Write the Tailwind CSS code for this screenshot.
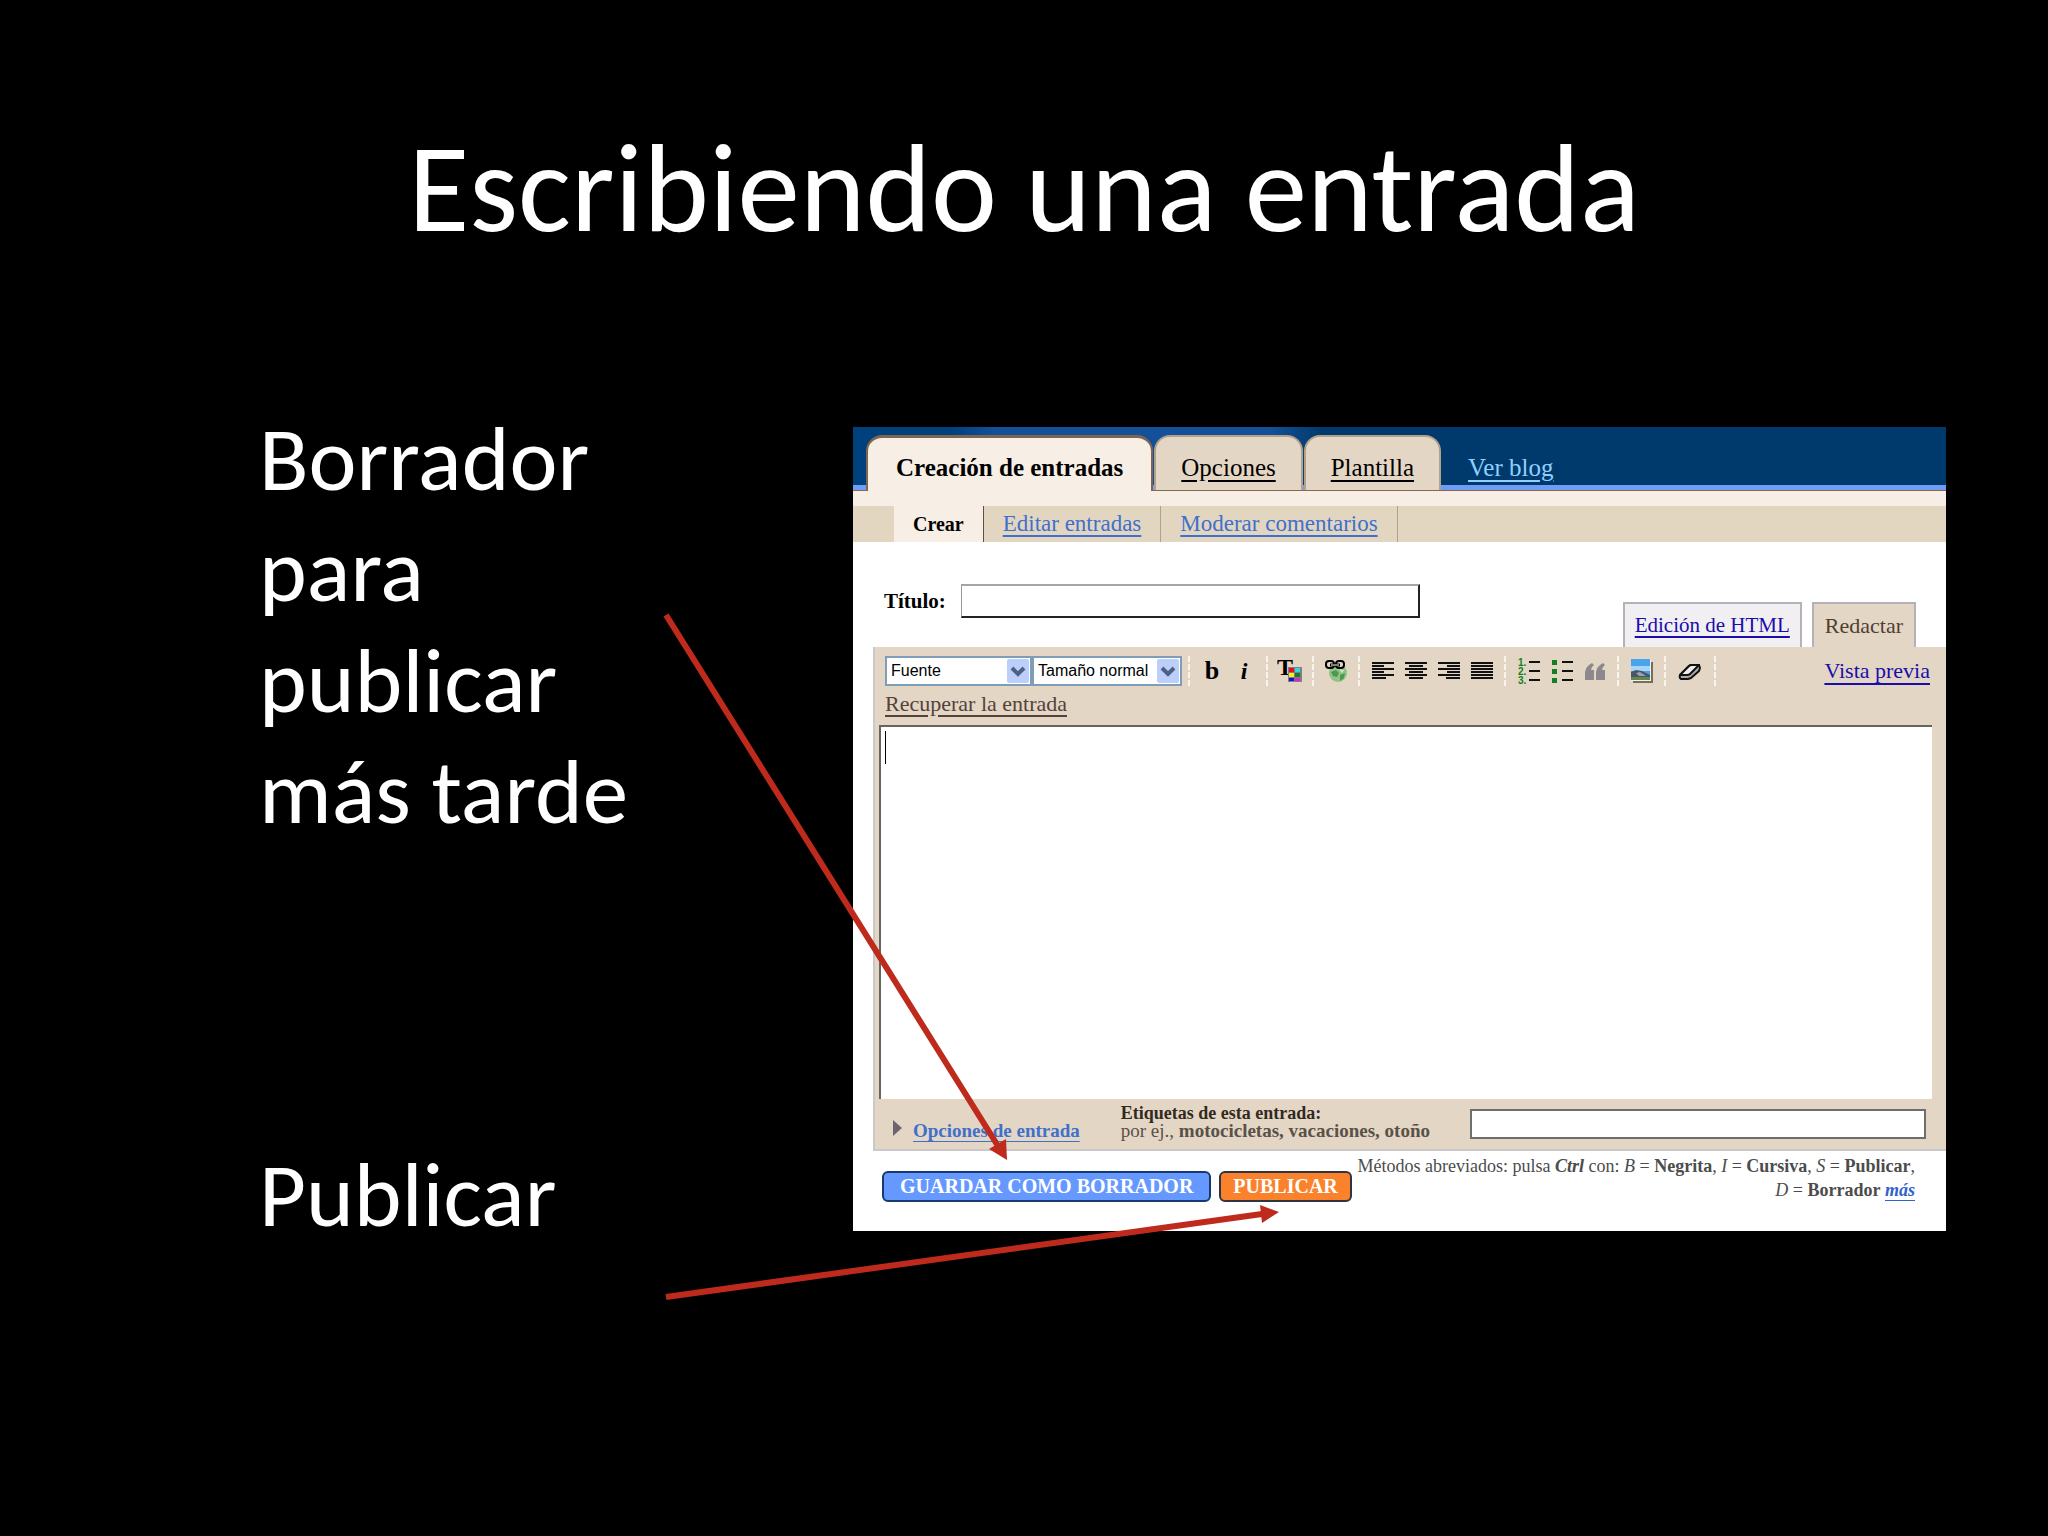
<!DOCTYPE html>
<html lang="es">
<head>
  <meta charset="UTF-8">
  <meta name="viewport" content="width=device-width, initial-scale=1.0">
  <title>Escribiendo una entrada</title>
  <script src="https://cdn.jsdelivr.net/npm/@tailwindcss/browser@4"></script>
</head>
<body class="bg-black">
  <main class="relative min-h-screen bg-black pt-[123px] pb-20 font-['Carlito','Lato',sans-serif] text-white">
    <h1 class="text-center text-[125px] leading-[132px]">Escribiendo una entrada</h1>

    <div class="mt-[148px] grid grid-cols-[594px_1fr] pr-[102px] pl-[259px]">
      <div class="text-[91px] leading-[111px]">
        <p>Borrador<br>para<br>publicar<br>más tarde</p>
        <p class="mt-[292px]">Publicar</p>
      </div>

      <!-- Blog editor -->
      <section class="mt-6 self-start bg-white font-['Liberation_Serif',serif] text-black">
        <nav class="flex h-16 items-end bg-[linear-gradient(to_bottom,transparent_58px,#6f9cf5_58px,#6f9cf5_63px,#86684f_63px),linear-gradient(to_right,#00407c_0%,#00407c_9%,#14509a_13%,#14509a_38%,#003a6c_43%)] pl-[13px] text-[25px] leading-[30px]">
          <a href="#" class="flex h-14 items-end rounded-t-[16px] border-x-2 border-t-3 border-[#7d6552] bg-[#f7eee6] px-7 pb-2 font-bold">Creación de entradas</a>
          <a href="#" class="mb-px ml-px flex h-[55px] items-end rounded-t-[16px] border-x-2 border-t-2 border-[#b3a18b] bg-[#e4d6c4] px-[25px] pb-[7px] underline underline-offset-4">Opciones</a>
          <a href="#" class="mb-px ml-px flex h-[55px] items-end rounded-t-[16px] border-x-2 border-t-2 border-[#b3a18b] bg-[#e4d6c4] px-[25px] pb-[7px] underline underline-offset-4">Plantilla</a>
          <a href="#" class="ml-[27px] pb-2 text-[#8fd0ff] underline underline-offset-4">Ver blog</a>
        </nav>
        <div class="h-[15px] bg-[#f7eee6]"></div>
        <nav class="flex h-9 bg-[#e3d6c1] pl-[41px] text-[23px] leading-[36px]">
          <a href="#" class="border-r border-[#5e4f45] bg-[#f7eee6] px-[19px] text-[20px] font-bold">Crear</a>
          <a href="#" class="border-r border-[#b3a18b] px-[19px] text-[#4070cc] underline underline-offset-4">Editar entradas</a>
          <a href="#" class="border-r border-[#b3a18b] px-[19px] text-[#4070cc] underline underline-offset-4">Moderar comentarios</a>
        </nav>

        <div class="flex h-[105px] items-end pr-[30px] pl-[31px] text-[21px]">
          <label for="titulo" class="mb-[29px] leading-[34px] font-bold">Título:</label>
          <input id="titulo" type="text" class="mb-[29px] ml-[15px] h-[34px] w-[459px] border-t-2 border-r-2 border-b-2 border-l border-t-[#a5a5a5] border-r-[#222] border-b-[#222] border-l-[#999] bg-white px-2">
          <div class="ml-auto flex gap-[10px] leading-[43px]">
            <a href="#" class="h-[45px] border-x-2 border-t-2 border-[#b4b2b8] bg-[#f1eff2] px-[10px] text-[#1a0dab] underline underline-offset-4">Edición de HTML</a>
            <a href="#" class="h-[45px] border-x-2 border-t-2 border-[#b4b2b8] bg-[#e3d6c4] px-[11px] text-[22px] text-[#4f4034]">Redactar</a>
          </div>
        </div>

        <div class="ml-5 border-b-2 border-l-2 border-[#cbc8cb] bg-[#e3d6c4] pt-[9px]">
          <div class="flex h-[30px] items-center pr-4 pl-[10px]">
            <div class="relative">
              <select aria-label="Fuente" class="block h-[30px] w-[147px] appearance-none border-2 border-[#7f9db9] bg-white pl-1 font-['Liberation_Sans',sans-serif] text-[16px]"><option>Fuente</option></select>
              <svg class="pointer-events-none absolute top-[3px] right-[3px]" width="22" height="24" viewBox="0 0 22 24"><rect width="22" height="24" rx="2" fill="#bccffa"/><path d="M5 9l6 6 6-6" fill="none" stroke="#4d6185" stroke-width="4"/></svg>
            </div>
            <div class="relative">
              <select aria-label="Tamaño" class="block h-[30px] w-[150px] appearance-none border-2 border-[#7f9db9] bg-white pl-1 font-['Liberation_Sans',sans-serif] text-[16px]"><option>Tamaño normal</option></select>
              <svg class="pointer-events-none absolute top-[3px] right-[3px]" width="22" height="24" viewBox="0 0 22 24"><rect width="22" height="24" rx="2" fill="#bccffa"/><path d="M5 9l6 6 6-6" fill="none" stroke="#4d6185" stroke-width="4"/></svg>
            </div>
            <span class="mx-[6px] h-[30px] border-l-2 border-dashed border-[#faf5ec]"></span>
            <button type="button" class="w-8 text-[26px] leading-[30px] font-bold">b</button>
            <button type="button" class="w-8 text-[24px] leading-[30px] font-bold italic">i</button>
            <span class="mx-[6px] h-[30px] border-l-2 border-dashed border-[#faf5ec]"></span>
            <button type="button" aria-label="Color del texto" class="flex w-8 justify-center">
              <svg width="26" height="26" viewBox="0 0 26 26">
                <text x="0" y="17" font-family="Liberation Serif" font-size="24" font-weight="bold">T</text>
                <rect x="11" y="9" width="14" height="15" fill="#857d86"/>
                <path fill="#e01020" d="M12 10h5v4h-5z"/><path fill="#30dada" d="M18 10h5v4h-5z"/>
                <path fill="#ffee10" d="M12 15h5v4h-5z"/><path fill="#108030" d="M18 15h5v4h-5z"/>
                <path fill="#1010d0" d="M12 20h5v3h-5z"/><path fill="#e020d0" d="M18 20h5v3h-5z"/>
              </svg>
            </button>
            <span class="mx-[6px] h-[30px] border-l-2 border-dashed border-[#faf5ec]"></span>
            <button type="button" aria-label="Enlace" class="flex w-8 justify-center">
              <svg width="24" height="26" viewBox="0 0 24 26">
                <circle cx="14" cy="15" r="9" fill="#8fc487"/>
                <path d="M7 14l5-2 3 3-2 4-4-1zM16 17l5-2-1 5-4 3z" fill="#4f9850"/><path d="M15 11l5 1-2 3z" fill="#cfe8c8"/>
                <rect x="2" y="3" width="8" height="7" rx="3" fill="#e3d6c4" stroke="#000" stroke-width="2"/>
                <rect x="12" y="3" width="8" height="7" rx="3" fill="#e3d6c4" stroke="#000" stroke-width="2"/>
                <path d="M6 7h10" stroke="#000" stroke-width="3"/><path d="M7 7h8" stroke="#fff"/>
              </svg>
            </button>
            <span class="mx-[6px] h-[30px] border-l-2 border-dashed border-[#faf5ec]"></span>
            <button type="button" aria-label="Alinear a la izquierda" class="flex w-[33px] justify-center">
              <svg width="22" height="20" viewBox="0 0 22 20" stroke="#111" stroke-width="2"><path d="M0 2h22M0 5h12M0 8h22M0 11h12M0 14h22M0 17h14"/></svg>
            </button>
            <button type="button" aria-label="Centrar" class="flex w-[33px] justify-center">
              <svg width="22" height="20" viewBox="0 0 22 20" stroke="#111" stroke-width="2"><path d="M0 2h22M4 5h14M0 8h22M4 11h14M0 14h22M4 17h14"/></svg>
            </button>
            <button type="button" aria-label="Alinear a la derecha" class="flex w-[33px] justify-center">
              <svg width="22" height="20" viewBox="0 0 22 20" stroke="#111" stroke-width="2"><path d="M0 2h22M9 5h13M0 8h22M9 11h13M0 14h22M8 17h14"/></svg>
            </button>
            <button type="button" aria-label="Justificar" class="flex w-[33px] justify-center">
              <svg width="22" height="20" viewBox="0 0 22 20" stroke="#111" stroke-width="2"><path d="M0 2h22M0 5h22M0 8h22M0 11h22M0 14h22M0 17h22"/></svg>
            </button>
            <span class="mx-[6px] h-[30px] border-l-2 border-dashed border-[#faf5ec]"></span>
            <button type="button" aria-label="Lista numerada" class="flex w-[33px] justify-center">
              <svg width="22" height="28" viewBox="0 0 22 28">
                <g font-family="Liberation Sans" font-size="10" font-weight="bold" fill="#128020"><text x="0" y="9">1.</text><text x="0" y="18">2.</text><text x="0" y="27">3.</text></g>
                <path d="M11 5h11M11 14h11M11 23h11" stroke="#111" stroke-width="2"/>
              </svg>
            </button>
            <button type="button" aria-label="Lista con viñetas" class="flex w-[33px] justify-center">
              <svg width="22" height="28" viewBox="0 0 22 28"><path d="M1 3h5v5H1zM1 12h5v5H1zM1 21h5v5H1z" fill="#128020"/><path d="M11 5h11M11 14h11M11 23h11" stroke="#111" stroke-width="2"/></svg>
            </button>
            <button type="button" aria-label="Cita" class="flex w-[33px] justify-center">
              <svg width="20" height="17" viewBox="0 0 20 17" fill="#8c888c"><path d="M0 17V9Q1 3 7 0l2 2Q6 4 6 7h3v10zM11 17V9Q12 3 18 0l2 2q-3 2-3 5h3v10z"/></svg>
            </button>
            <span class="mx-[6px] h-[30px] border-l-2 border-dashed border-[#faf5ec]"></span>
            <button type="button" aria-label="Imagen" class="flex w-[33px] justify-center">
              <svg width="26" height="27" viewBox="0 0 26 27">
                <path d="M4 4h20v21H4z" fill="#746d61"/><path d="M2 1h20v22H2z" fill="#f5f0df"/>
                <path d="M2 1h19v21H2z" fill="#4aa3ec"/><path d="M2 8h19v5H2z" fill="#a8d6f5"/>
                <path d="M2 14l5-2 6 1 8 4v3H2z" fill="#48566a"/><path d="M7 15l4-1 6 4h-7z" fill="#9ba3b3"/><path d="M2 19h19v3H2z" fill="#62874f"/>
              </svg>
            </button>
            <span class="mx-[6px] h-[30px] border-l-2 border-dashed border-[#faf5ec]"></span>
            <button type="button" aria-label="Quitar formato" class="flex w-9 justify-center">
              <svg width="24" height="20" viewBox="0 0 24 20" stroke="#111" stroke-width="2" stroke-linejoin="round"><path d="M2 14L11 5q1-1 3-1h7l1 3-1 3-8 7-3 1H3q-2-1-1-4z" fill="#aaa"/><path d="M2 14L11 5q1-1 3-1h7l-9 9q-1 1-3 1z" fill="#eee"/></svg>
            </button>
            <span class="mx-[6px] h-[30px] border-l-2 border-dashed border-[#faf5ec]"></span>
            <a href="#" class="ml-auto text-[22px] leading-[30px] text-[#1a0dab] underline underline-offset-5">Vista previa</a>
          </div>
          <div class="mt-1 pl-[10px] text-[22px] leading-[28px] text-[#54423a]"><a href="#" class="underline underline-offset-4">Recuperar la entrada</a></div>

          <div class="relative mt-[7px] mr-[14px] ml-1">
            <textarea aria-label="Entrada" class="block h-[374px] w-full resize-none border-t-2 border-l-2 border-[#66665f] bg-white p-2"></textarea>
            <span class="absolute top-[6px] left-[6px] h-[33px] w-px bg-black"></span>
          </div>

          <div class="flex h-[50px] items-center pr-5 pl-[18px]">
            <svg class="mt-2" width="9" height="16" viewBox="0 0 9 16"><path d="M0 0l9 8-9 8z" fill="#6d6470"/></svg>
            <a href="#" class="mt-[14px] ml-[11px] text-[19px] leading-[24px] font-bold text-[#4070cc] underline underline-offset-4">Opciones de entrada</a>
            <label for="etiquetas" class="mb-1 ml-auto text-[19px] leading-[18px] text-[#5a5149]"><b class="text-[18px] text-[#33291f]">Etiquetas de esta entrada:</b><br>por ej., <b>motocicletas, vacaciones, otoño</b></label>
            <input id="etiquetas" type="text" class="ml-10 h-[30px] w-[456px] border-2 border-[#6b706e] bg-white px-2">
          </div>
        </div>

        <div class="flex h-20 items-start pr-[31px] pl-[29px]">
          <button type="button" class="mt-5 h-[31px] rounded-md border-2 border-[#163a6e] bg-[#6699ff] px-4 text-[20px] leading-[27px] font-bold text-white">GUARDAR COMO BORRADOR</button>
          <button type="button" class="mt-5 ml-2 h-[31px] rounded-md border-2 border-[#2f3440] bg-[#fb822c] px-3 text-[20px] leading-[27px] font-bold text-white">PUBLICAR</button>
          <p class="ml-auto pt-[3px] text-right text-[18px] leading-[24px] text-[#4c4c4c]">Métodos abreviados: pulsa <b><i>Ctrl</i></b> con: <i>B</i> = <b>Negrita</b>, <i>I</i> = <b>Cursiva</b>, <i>S</i> = <b>Publicar</b>,<br><i>D</i> = <b>Borrador</b> <a href="#" class="font-bold text-[#2f62cc] italic underline underline-offset-4">más</a></p>
        </div>
      </section>
    </div>

    <!-- Arrows from the notes to the buttons -->
    <svg class="pointer-events-none absolute top-0 left-0" width="2048" height="1536" viewBox="0 0 2048 1536" stroke="#be2a1c" fill="#be2a1c">
      <path d="M666 615L998 1146M666 1297L1262 1214" stroke-width="6"/>
      <path d="M1007 1160L989 1149 1006 1139zM1279 1212L1260 1205 1262 1223z" stroke="none"/>
    </svg>
  </main>
</body>
</html>
